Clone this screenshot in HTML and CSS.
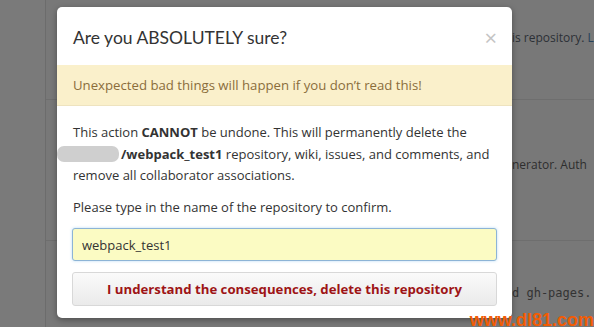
FILE: index.html
```html
<!DOCTYPE html>
<html lang="en">
<head>
  <meta charset="UTF-8">
  <title>Delete repository</title>
  <link rel="stylesheet" href="styles.css">
</head>
<body>
  <div class="page">
    <div class="side"></div>
    <div class="main">
      <div class="row row-first"><span class="bg-text t1">is repository. <span class="link">Le</span></span></div>
      <div class="row row-second"><span class="bg-text t2">nerator. Auth</span></div>
      <div class="row row-third"><span class="bg-text mono">d gh-pages. P</span></div>
    </div>
  </div>

  <div class="modal">
    <div class="modal-header">
      <h3>Are you ABSOLUTELY sure?</h3>
      <span class="close">&times;</span>
    </div>
    <div class="flash-warn">Unexpected bad things will happen if you don’t read this!</div>
    <div class="modal-body">
      <p>This action <strong>CANNOT</strong> be undone. This will permanently delete the <span class="blur"></span><strong>/webpack_test1</strong> repository, wiki, issues, and comments, and remove all collaborator associations.</p>
      <p class="confirm-label">Please type in the name of the repository to confirm.</p>
      <input type="text" class="confirm-input" value="webpack_test1">
      <button class="danger-btn">I understand the consequences, delete this repository</button>
    </div>
  </div>

  <div class="watermark">www.dl81.com</div>
</body>
</html>
```

FILE: styles.css
```css
html, body {
  margin: 0;
  height: 100%;
}
body {
  font-family: "Open Sans", "Liberation Sans", sans-serif;
  background: #767676;
  overflow: hidden;
  position: relative;
}
.page {
  display: flex;
  height: 100%;
}
.side {
  width: 45px;
  border-right: 1px solid #6c6c6c;
  background: #7a7a7a;
}
.main {
  flex: 1;
  background: #787878;
}
.row {
  border-bottom: 1px solid #6e6e6e;
  position: relative;
}
.row-first { height: 99px; }
.row-second { height: 140px; }
.row-third { height: 87px; border-bottom: none; }
.bg-text {
  position: absolute;
  left: 466px;
  color: #2e2e2e;
  font-size: 12px;
  white-space: nowrap;
}
.t1 { top: 29px; color: #2c3036; }
.link { color: #24405a; }
.t2 { top: 56px; }
.mono {
  top: 45px;
  font-family: "DejaVu Sans Mono", monospace;
  font-size: 12px;
  color: #333;
}

.modal {
  position: absolute;
  left: 57px;
  top: 7px;
  width: 455px;
  height: 311px;
  background: #fff;
  border-radius: 5px;
  box-shadow: 0 2px 6px rgba(0,0,0,0.35);
  overflow: hidden;
}
.modal-header {
  display: flex;
  justify-content: space-between;
  align-items: center;
  height: 58px;
  padding: 0 15px 0 16px;
}
.modal-header h3 {
  margin: 0;
  font-family: Lato, "Open Sans", sans-serif;
  font-size: 17.5px;
  font-weight: normal;
  color: #333;
  padding-top: 2px;
}
.close {
  color: #c4c4c4;
  font-size: 22px;
  padding-top: 2px;
}
.flash-warn {
  background: #faf0cb;
  color: #8a6d3b;
  font-size: 13.2px;
  padding: 11px 16px;
  border-bottom: 1px solid #eee3bf;
}
.modal-body {
  padding: 16px 15px 0 15px;
  font-size: 13px;
  color: #333;
}
.modal-body p {
  margin: 0 0 10px 0;
  line-height: 21.5px;
  padding-left: 1px;
}
.blur {
  display: inline-block;
  width: 62px;
  height: 16px;
  margin-left: -16px;
  margin-right: 2px;
  vertical-align: -3px;
  background: #cfcfcf;
  border-radius: 7px;
}
.confirm-label {
  margin-bottom: 11px;
}
.confirm-input {
  display: block;
  box-sizing: border-box;
  width: 100%;
  height: 33px;
  padding: 0 9px;
  font-family: inherit;
  font-size: 13px;
  color: #333;
  background: #fbfbc3;
  border: 1px solid #8db4d6;
  border-radius: 3px;
  box-shadow: 0 0 3px rgba(81,167,232,0.4);
}
.danger-btn {
  display: block;
  box-sizing: border-box;
  width: 100%;
  height: 34px;
  margin-top: 11px;
  font-family: "Open Sans", sans-serif;
  font-size: 13.2px;
  font-weight: bold;
  color: #9e1416;
  background: linear-gradient(#fafafa, #eaeaea);
  border: 1px solid #d8d8d8;
  border-radius: 3px;
}
.watermark {
  position: absolute;
  right: 0;
  bottom: -4px;
  color: #f25c05;
  font-family: "Liberation Sans", sans-serif;
  font-weight: bold;
  font-size: 18px;
}
```
